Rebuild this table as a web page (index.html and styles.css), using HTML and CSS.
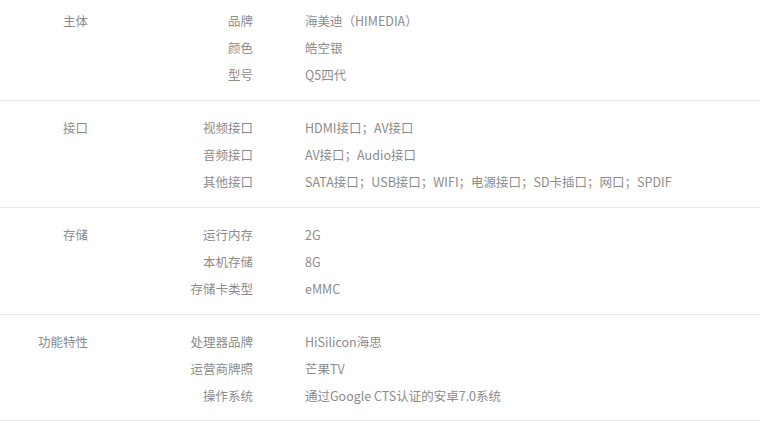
FILE: index.html
```html
<!DOCTYPE html>
<html lang="zh-CN">
<head>
<meta charset="utf-8">
<title>规格参数</title>
<link rel="stylesheet" href="styles.css">
</head>
<body>
<div class="specs">
  <div class="spec">
    <div class="group">主体</div>
    <div class="items">
      <div class="item"><div class="label">品牌</div><div class="value">海美迪（HIMEDIA）</div></div>
      <div class="item"><div class="label">颜色</div><div class="value">皓空银</div></div>
      <div class="item"><div class="label">型号</div><div class="value">Q5四代</div></div>
    </div>
  </div>
  <div class="spec">
    <div class="group">接口</div>
    <div class="items">
      <div class="item"><div class="label">视频接口</div><div class="value">HDMI接口；AV接口</div></div>
      <div class="item"><div class="label">音频接口</div><div class="value">AV接口；Audio接口</div></div>
      <div class="item"><div class="label">其他接口</div><div class="value">SATA接口；USB接口；WIFI；电源接口；SD卡插口；网口；SPDIF</div></div>
    </div>
  </div>
  <div class="spec">
    <div class="group">存储</div>
    <div class="items">
      <div class="item"><div class="label">运行内存</div><div class="value">2G</div></div>
      <div class="item"><div class="label">本机存储</div><div class="value">8G</div></div>
      <div class="item"><div class="label">存储卡类型</div><div class="value">eMMC</div></div>
    </div>
  </div>
  <div class="spec">
    <div class="group">功能特性</div>
    <div class="items">
      <div class="item"><div class="label">处理器品牌</div><div class="value">HiSilicon海思</div></div>
      <div class="item"><div class="label">运营商牌照</div><div class="value">芒果TV</div></div>
      <div class="item"><div class="label">操作系统</div><div class="value">通过Google CTS认证的安卓7.0系统</div></div>
    </div>
  </div>
</div>
</body>
</html>
```

FILE: styles.css
```css
html, body {
  margin: 0;
  padding: 0;
  background: #fff;
}
body {
  font-family: "Noto Sans CJK SC", "Noto Sans", sans-serif;
  font-size: 12.5px;
  color: #8c8c8c;
}
.spec {
  display: flex;
  padding: 13px 0 12px;
  border-bottom: 1px solid #e8e8e8;
}
.spec:first-child {
  padding-top: 7px;
}
.spec:last-child {
  padding-bottom: 11px;
}
.group {
  width: 88px;
  text-align: right;
  line-height: 27px;
}
.items {
  display: flex;
  flex-direction: column;
}
.item {
  display: flex;
  line-height: 27px;
  height: 27px;
}
.label {
  width: 165px;
  text-align: right;
}
.value {
  margin-left: 52px;
  white-space: nowrap;
}
```
